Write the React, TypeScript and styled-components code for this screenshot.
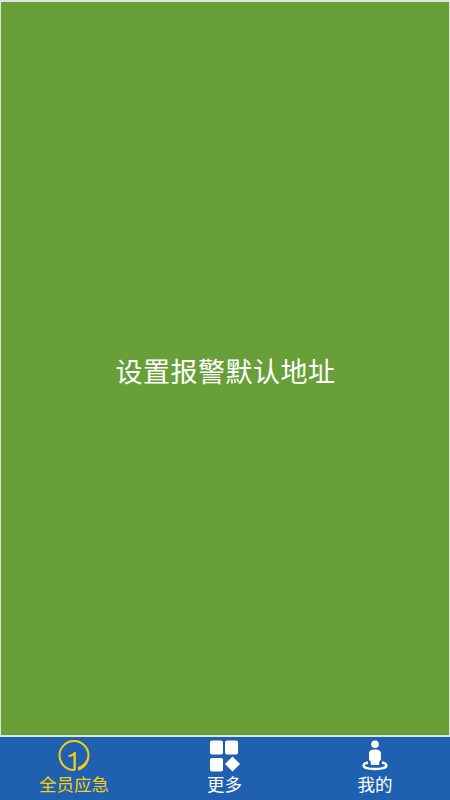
import React from "react";
import styled, { createGlobalStyle } from "styled-components";

const Global = createGlobalStyle`
  html, body { margin: 0; padding: 0; height: 100%; background: #fff; }
  #root { height: 100%; }
  * { box-sizing: border-box; }
`;

const Screen = styled.div`
  width: 450px;
  height: 800px;
  display: flex;
  flex-direction: column;
  overflow: hidden;
  background: #dfe6df;
  font-family: "Noto Sans CJK SC", "Noto Sans", sans-serif;
`;

const Main = styled.main`
  height: 733px;
  margin: 2px 1px 0;
  background: #699f39;
  display: flex;
  align-items: center;
  justify-content: center;
  padding: 4px 0 0 1px;
`;

const Title = styled.div`
  color: #fff;
  font-size: 27px;
  line-height: 36px;
  letter-spacing: 0.5px;
  white-space: nowrap;
`;

const TabBar = styled.nav`
  margin-top: 2px;
  height: 63px;
  background: #2060b0;
  display: grid;
  grid-template-columns: 148px 153px 148px;
`;

const Tab = styled.div<{ $active?: boolean }>`
  display: flex;
  flex-direction: column;
  align-items: center;
  color: ${(p) => (p.$active ? "#f6ce12" : "#fff")};
  padding-top: 3px;
`;

const IconBox = styled.svg`
  width: 32px;
  height: 32px;
  display: block;
`;

const Label = styled.span`
  font-size: 17.5px;
  line-height: 24px;
  white-space: nowrap;
`;

export default function App() {
  return (
    <Screen>
      <Global />
      <Main>
        <Title>设置报警默认地址</Title>
      </Main>
      <TabBar>
        <Tab $active>
          <IconBox viewBox="0 0 32 32" fill="currentColor">
            <path d="M16.800 30A14.500 14.500 0 1 1 30.500 15.500" fill="none" stroke="currentColor" strokeWidth="2" />
            <path d="M31.500 15.500A15.500 15.500 0 0 1 20 30.500L20 27C25 25.500 29 21 29.500 15.500Z" />
            <path d="M10.500 15c2.800-.3 4.500-1.300 5.500-3h1.800v18h-2.300V15.500c-1.200.8-3 1.300-5 1.400z" />
          </IconBox>
          <Label>全员应急</Label>
        </Tab>
        <Tab>
          <IconBox viewBox="0 0 32 32" fill="currentColor">
            <rect x="1" y="0.500" width="13" height="14" rx="2" />
            <rect x="16" y="0.500" width="13" height="14" rx="2" />
            <rect x="1" y="18" width="13" height="13.500" rx="2" />
            <path d="M23.500 16.500l7.500 7.500-7.500 7.500-7.500-7.500z" />
          </IconBox>
          <Label>更多</Label>
        </Tab>
        <Tab>
          <IconBox viewBox="0 0 32 32" fill="currentColor">
            <circle cx="16" cy="4.300" r="3.800" />
            <path d="M10 13.500c0-2.600 2.300-3.900 6-3.900s6 1.300 6 3.900v5.500c0 1.100-.6 1.700-1.500 1.900l-.6 4.100h-7.800l-.6-4.100c-.9-.2-1.500-.8-1.500-1.900z" />
            <path d="M9 22.500c-3.300.7-4.500 1.900-4.500 3.100 0 2 5 3.400 11.500 3.400s11.500-1.400 11.500-3.400c0-1.200-1.200-2.400-4.500-3.100" fill="none" stroke="currentColor" strokeWidth="2.400" />
          </IconBox>
          <Label>我的</Label>
        </Tab>
      </TabBar>
    </Screen>
  );
}
